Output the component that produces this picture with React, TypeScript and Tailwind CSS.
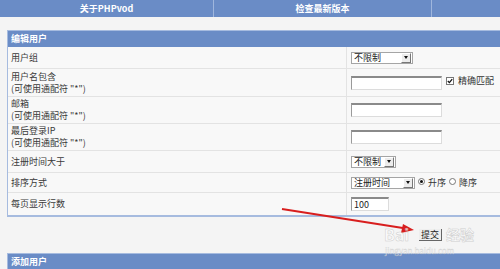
import React from 'react';

const FONT = '"Noto Sans CJK SC", "Liberation Sans", sans-serif';

const Select: React.FC<{ text: string; width: string }> = ({ text, width }) => (
  <div className={`flex items-center h-[12px] bg-white border border-[#a5a5a5] ${width}`}>
    <span className="flex-1 pl-[2px] text-[9px] leading-none text-[#222]">{text}</span>
    <span className="w-[10px] h-[10px] mr-[1px] flex items-center justify-center bg-[#ececec] border-r border-b border-[#777] border-l border-t border-l-white border-t-white">
      <span className="w-0 h-0 border-l-[2.5px] border-r-[2.5px] border-t-[3px] border-l-transparent border-r-transparent border-t-[#111]" />
    </span>
  </div>
);

const TextInput: React.FC<{ width: string; value?: string }> = ({ width, value }) => (
  <div className={`h-[14px] bg-white border-t-2 border-l border-t-[#8a8a8a] border-l-[#9a9a9a] border-r border-b border-r-[#dcdcdc] border-b-[#dcdcdc] flex items-center ${width}`}>
    {value && <span className="pl-[2px] text-[9px] leading-none text-[#222]">{value}</span>}
  </div>
);

const Radio: React.FC<{ checked?: boolean }> = ({ checked }) => (
  <span className="w-[7px] h-[7px] rounded-full bg-white border border-[#777] flex items-center justify-center -mt-[3px]">
    {checked && <span className="w-[3px] h-[3px] rounded-full bg-[#111]" />}
  </span>
);

const Label: React.FC<{ main: string; hint?: boolean }> = ({ main, hint }) => (
  <div className="flex flex-col justify-center pl-[3px] text-[9px] leading-[12px] text-[#3a3a3a]">
    <span>{main}</span>
    {hint && <span>(可使用通配符 "*")</span>}
  </div>
);

const rows: { label: string; hint?: boolean; h: string; field: React.ReactNode }[] = [
  { label: '用户组', h: 'h-[21px]', field: <Select text="不限制" width="w-[62px]" /> },
  {
    label: '用户名包含',
    hint: true,
    h: 'h-[28px]',
    field: (
      <div className="flex items-center gap-[4px]">
        <TextInput width="w-[91px]" />
        <span className="w-[8px] h-[8px] bg-white border border-[#777] flex items-center justify-center -mt-[4px]">
          <svg width="6" height="6" viewBox="0 0 6 6">
            <path d="M0.8 3 L2.4 4.6 L5.2 1.2" stroke="#111" strokeWidth="1.3" fill="none" />
          </svg>
        </span>
        <span className="text-[9px] text-[#333] -mt-[4px]">精确匹配</span>
      </div>
    ),
  },
  { label: '邮箱', hint: true, h: 'h-[27px]', field: <TextInput width="w-[91px]" /> },
  { label: '最后登录IP', hint: true, h: 'h-[27px]', field: <TextInput width="w-[91px]" /> },
  { label: '注册时间大于', h: 'h-[22px]', field: <Select text="不限制" width="w-[45px]" /> },
  {
    label: '排序方式',
    h: 'h-[20px]',
    field: (
      <div className="flex items-center gap-[3px] text-[9px] text-[#333]">
        <Select text="注册时间" width="w-[64px]" />
        <Radio checked />
        <span>升序</span>
        <Radio />
        <span>降序</span>
      </div>
    ),
  },
  { label: '每页显示行数', h: 'h-[23px]', field: <TextInput width="w-[38px]" value="100" /> },
];

export default function App() {
  return (
    <div className="relative w-[500px] h-[269px] overflow-hidden bg-[#f4f4f4]" style={{ fontFamily: FONT }}>
      {/* top nav */}
      <div className="flex h-[17px] bg-[#6a8cc6] text-white font-bold text-[9px]">
        <div className="w-[214px] flex items-center justify-center border-r border-[#9fb6dd]">关于PHPvod</div>
        <div className="w-[218px] flex items-center justify-center border-r border-[#9fb6dd]">检查最新版本</div>
        <div className="flex-1" />
      </div>

      {/* edit user panel */}
      <div className="mt-[13px] ml-[7px] w-[520px] border border-[#a6bbdf] border-b-2">
        <div className="h-[16px] bg-[#6a8cc6] text-white font-bold text-[9px] flex items-center pl-[3px]">编辑用户</div>
        {rows.map((r, i) => (
          <div key={i} className={`grid grid-cols-[339px_1fr] bg-[#f8f8f8] ${r.h} ${i > 0 ? 'border-t border-[#e3e3e3]' : ''}`}>
            <div className="flex items-center border-r border-[#e3e3e3]">
              <Label main={r.label} hint={r.hint} />
            </div>
            <div className="flex items-center pl-[4px]">{r.field}</div>
          </div>
        ))}
      </div>

      {/* submit */}
      <div className="h-[36px] flex items-center pl-[419px]">
        <button className="px-[2px] text-[9px] leading-[11px] text-[#222] border-b border-r border-[#666] bg-[#eeeeee]">提交</button>
      </div>

      {/* add user panel */}
      <div className="ml-[7px] w-[520px] border border-[#a6bbdf]">
        <div className="h-[16px] bg-[#6a8cc6] text-white font-bold text-[9px] flex items-center pl-[3px]">添加用户</div>
      </div>

      {/* annotation arrow */}
      <svg className="absolute left-0 top-0 pointer-events-none" width="500" height="269">
        <line x1="282" y1="209" x2="406" y2="228.5" stroke="#d81e1e" strokeWidth="2" />
        <path d="M414 230 L403 224 L401 233 Z" fill="#d81e1e" />
      </svg>

      {/* watermark */}
      <span
        className="absolute left-[384px] top-[226px] text-[16px] leading-[16px] font-bold text-white opacity-70 pointer-events-none"
        style={{ WebkitTextStroke: '0.5px #bdbdbd' }}
      >
        Bai
      </span>
      <span
        className="absolute left-[446px] top-[226px] text-[14px] leading-[16px] font-bold text-white opacity-70 pointer-events-none"
        style={{ WebkitTextStroke: '0.5px #bdbdbd' }}
      >
        经验
      </span>
      <span
        className="absolute left-[385px] top-[247px] text-[8px] leading-[8px] text-white opacity-70 pointer-events-none"
        style={{ WebkitTextStroke: '0.3px #bdbdbd' }}
      >
        jingyan.baidu.com
      </span>
    </div>
  );
}
